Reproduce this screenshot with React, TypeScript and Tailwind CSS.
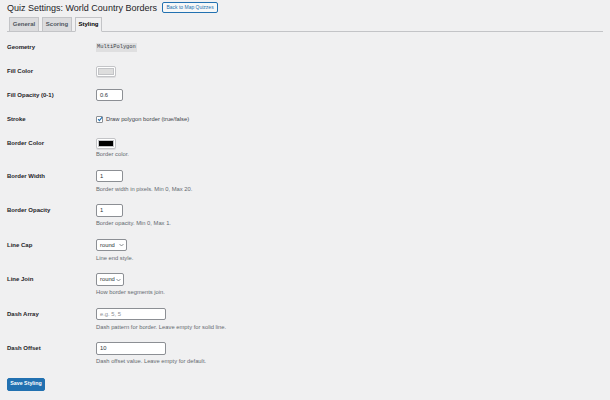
import React from 'react'

const font = { fontFamily: '"Liberation Sans", Arial, sans-serif' }

function Row({
  label,
  children,
  desc,
  descGap = 'mt-[2.5px]',
}: {
  label: string
  children: React.ReactNode
  desc?: string
  descGap?: string
}) {
  return (
    <div className="flex py-[6px]">
      <div className="flex h-[12px] w-[89px] shrink-0 items-center text-[6px] font-bold text-[#1d2327]">
        {label}
      </div>
      <div className="flex flex-col">
        <div className="flex h-[12px] items-center">{children}</div>
        {desc && <p className={`${descGap} text-[5.8px] leading-[8px] text-[#646970]`}>{desc}</p>}
      </div>
    </div>
  )
}

function TextInput({ value, placeholder, width }: { value?: string; placeholder?: string; width: string }) {
  return (
    <div
      className={`flex h-[12.5px] ${width} items-center rounded-[2px] border border-[#8c8f94] bg-white px-[3px] text-[5.8px] ${
        value ? 'text-[#2c3338]' : 'text-[#8c8f94]'
      }`}
    >
      {value ?? placeholder}
    </div>
  )
}

function Select({ value, width }: { value: string; width: string }) {
  return (
    <div
      className={`flex h-[12.5px] ${width} items-center justify-between rounded-[2px] border border-[#8c8f94] bg-white pl-[3px] pr-[2px] text-[5.8px] text-[#2c3338]`}
    >
      <span>{value}</span>
      <svg width="5" height="4" viewBox="0 0 10 6" fill="none">
        <path d="M1 1l4 4 4-4" stroke="#50575e" strokeWidth="1.3" />
      </svg>
    </div>
  )
}

function Swatch({ color }: { color: string }) {
  return (
    <div className="flex h-[11px] w-[20px] items-center justify-center rounded-[2px] border border-[#c3c4c7] bg-white shadow-[0_1px_0_#dcdcde]">
      <div className={`h-[7px] w-[16px] ${color} border border-[#c3c4c7]`} />
    </div>
  )
}

export default function App() {
  return (
    <div className="min-h-[400px] w-full bg-[#f0f0f1] px-[7px]" style={font}>
      {/* Header */}
      <div className="flex items-center gap-[5px] pt-[1.5px]">
        <h1 className="text-[9px] leading-[12px] text-[#1d2327]">Quiz Settings: World Country Borders</h1>
        <div className="flex h-[11px] items-center rounded-[2px] border border-[#2271b1] bg-[#f6f7f7] px-[3.5px] text-[5px] text-[#2271b1]">
          Back to Map Quizzes
        </div>
      </div>

      {/* Tabs */}
      <div className="mt-[3.5px] flex gap-[3px] border-b border-[#c3c4c7] pl-[2px]">
        <div className="-mb-px flex h-[14.5px] w-[30px] items-center justify-center border border-[#c3c4c7] bg-[#dcdcde] text-[6px] font-bold text-[#50575e]">
          General
        </div>
        <div className="-mb-px flex h-[14.5px] w-[30px] items-center justify-center border border-[#c3c4c7] bg-[#dcdcde] text-[6px] font-bold text-[#50575e]">
          Scoring
        </div>
        <div className="-mb-px flex h-[14.5px] w-[27px] items-center justify-center border border-[#c3c4c7] border-b-[#f0f0f1] bg-[#f0f0f1] text-[6px] font-bold text-[#000000]">
          Styling
        </div>
      </div>

      {/* Form */}
      <div className="pt-[3.5px]">
        <Row label="Geometry">
          <code
            className="flex h-[9px] items-center bg-[#dfdfe0] px-[1px] text-[5.4px] text-[#3c434a]"
            style={{ fontFamily: '"Liberation Mono", "DejaVu Sans Mono", monospace' }}
          >
            MultiPolygon
          </code>
        </Row>
        <Row label="Fill Color">
          <Swatch color="bg-[#dddddd]" />
        </Row>
        <Row label="Fill Opacity (0-1)">
          <TextInput value="0.6" width="w-[27px]" />
        </Row>
        <Row label="Stroke">
          <div className="flex items-center gap-[3px] text-[5.8px] text-[#3c434a]">
            <div className="flex h-[7px] w-[7px] items-center justify-center rounded-[1px] border border-[#8c8f94] bg-white">
              <svg width="6" height="6" viewBox="0 0 10 10" fill="none" className="shrink-0">
                <path d="M1.8 5.2l2.2 2.4L8.6 2" stroke="#2271b1" strokeWidth="1.8" />
              </svg>
            </div>
            Draw polygon border (true/false)
          </div>
        </Row>
        <Row label="Border Color" desc="Border color." descGap="mt-[1px]">
          <Swatch color="bg-black" />
        </Row>
        <Row label="Border Width" desc="Border width in pixels. Min 0, Max 20.">
          <TextInput value="1" width="w-[27px]" />
        </Row>
        <Row label="Border Opacity" desc="Border opacity. Min 0, Max 1.">
          <TextInput value="1" width="w-[27px]" />
        </Row>
        <Row label="Line Cap" desc="Line end style.">
          <Select value="round" width="w-[31px]" />
        </Row>
        <Row label="Line Join" desc="How border segments join.">
          <Select value="round" width="w-[28px]" />
        </Row>
        <Row label="Dash Array" desc="Dash pattern for border. Leave empty for solid line.">
          <TextInput placeholder="e.g. 5, 5" width="w-[70px]" />
        </Row>
        <Row label="Dash Offset" desc="Dash offset value. Leave empty for default.">
          <TextInput value="10" width="w-[70px]" />
        </Row>

        <div className="pt-[6.5px]">
          <div className="flex h-[13px] w-[38px] items-center justify-center rounded-[2px] border border-[#2271b1] bg-[#2271b1] text-[5.3px] font-bold text-white">
            Save Styling
          </div>
        </div>
      </div>
    </div>
  )
}
